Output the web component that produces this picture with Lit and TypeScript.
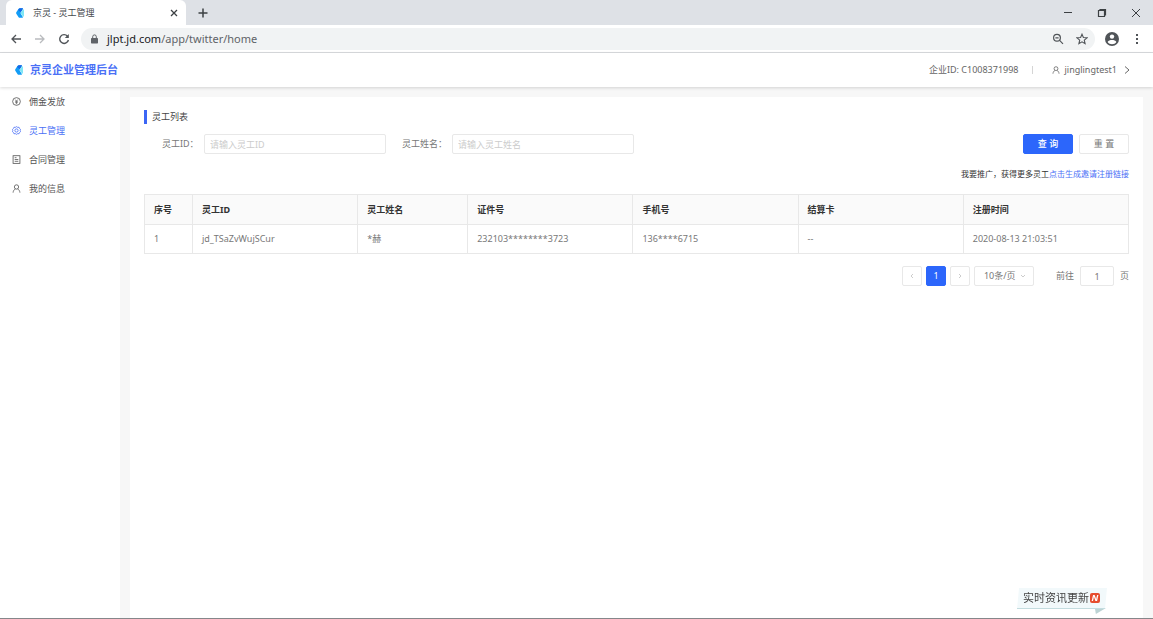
import { LitElement, html, css, svg } from "lit";
import { customElement, property } from "lit/decorators.js";
import { classMap } from "lit/directives/class-map.js";

const controls = css`
  * { box-sizing: border-box; }
  button, input, select { font: inherit; color: inherit; margin: 0; }
  button { cursor: pointer; }
  svg { display: block; fill: none; stroke: currentColor; flex: none; }
  a { text-decoration: none; }
`;

const brandMark = html`
  <svg width="10" height="10" viewBox="0 0 10 10" aria-hidden="true">
    <path d="M3.600 .8Q4 .3 4.600 .3H7.600L8 .8L5.800 4.200Q5.400 5 5.800 5.800L8 9.200L7.600 9.700H4.600Q4 9.700 3.600 9.200L1.300 5.700Q.9 5 1.300 4.300Z" fill="#129cf6" stroke="none"/>
    <path d="M4.600 .3H7.600L8 .8L5.800 4.200L3 2Z" fill="#1668e6" stroke="none"/>
    <path d="M8 1.200Q9 1.400 9 2.200V7.800Q9 8.600 8 8.800L5.900 5.600Q5.500 5 5.900 4.400Z" fill="#7ee6f5" stroke="none"/>
  </svg>`;

const userIcon = svg`<circle cx="5" cy="3.300" r="2.400"/><path d="M1.200 9.600C1.400 7.600 2.200 6.300 3.700 5.600M8.800 9.600C8.600 7.600 7.800 6.300 6.300 5.600"/>`;

@customElement("browser-bar")
class BrowserBar extends LitElement {
  static styles = [controls, css`
    :host { display: block; color: #5f6368; font-family: "Noto Sans", "Noto Sans CJK SC", sans-serif; }
    .strip { display: flex; align-items: center; height: 25px; padding-left: 6px; background: #dee1e6; }
    .tab { display: flex; align-items: center; gap: 8px; width: 180px; height: 25px; padding: 0 6px 0 9px;
      background: #fff; border-radius: 6px 6px 0 0; font-size: 9px; color: #45494d; }
    .title { flex: 1; white-space: nowrap; }
    button { display: grid; place-items: center; padding: 0; border: 0; background: none; width: 12px; height: 16px; color: #3c4043; }
    .add { margin-left: 11px; }
    .window { display: flex; gap: 22px; margin-left: auto; padding-right: 11px; }
    .tools { display: flex; align-items: center; gap: 12px; height: 28px; padding: 0 10px 0 10px;
      background: #fff; border-bottom: 1px solid #d9dbde; }
    .tools button { color: #505458; }
    .tools .off { color: #b9bbbe; }
    .address { flex: 1; display: flex; align-items: center; gap: 8px; height: 22px; padding: 0 7px 0 9px;
      margin: 0 -2px 0 -1px; border-radius: 11px; background: #f1f3f4; }
    .url { flex: 1; min-width: 0; font: 11px "Noto Sans", sans-serif; }
    .url span { color: #202124; }
    .mini { display: flex; gap: 12px; }
  `];
  render() {
    return html`
      <div class="strip">
        <div class="tab">${brandMark}<span class="title">京灵 - 灵工管理</span>
          <button aria-label="关闭标签页"><svg width="8" height="8" viewBox="0 0 8 8" stroke-width="1.300"><path d="M1 1L7 7M7 1L1 7"/></svg></button>
        </div>
        <button class="add" aria-label="新标签页"><svg width="10" height="10" viewBox="0 0 10 10" stroke-width="1.500"><path d="M5 .5V9.500M.5 5H9.500"/></svg></button>
        <div class="window">
          <button aria-label="最小化"><svg width="10" height="10" viewBox="0 0 10 10"><path d="M1 4.500H9"/></svg></button>
          <button aria-label="还原"><svg width="10" height="10" viewBox="0 0 10 10"><path d="M1.500 2.500H7.500V8.500H1.500ZM3 2.500V1.500H8.500V7H7.500" stroke-width="1.200"/></svg></button>
          <button aria-label="关闭"><svg width="10" height="10" viewBox="0 0 10 10"><path d="M1 1L9 9M9 1L1 9"/></svg></button>
        </div>
      </div>
      <div class="tools">
        <button aria-label="后退"><svg width="12" height="12" viewBox="0 0 12 12" stroke-width="1.300"><path d="M11 6H2M6 2L2 6L6 10"/></svg></button>
        <button class="off" aria-label="前进"><svg width="12" height="12" viewBox="0 0 12 12" stroke-width="1.300"><path d="M1 6H10M6 2L10 6L6 10"/></svg></button>
        <button aria-label="刷新"><svg width="12" height="12" viewBox="0 0 12 12" stroke-width="1.400"><path d="M9.500 3.200A4.400 4.400 0 1 0 10.400 7"/><path d="M10.800 1V5H6.800Z" fill="currentColor" stroke="none"/></svg></button>
        <div class="address">
          <svg width="9" height="10" viewBox="0 0 9 10"><rect x="1" y="4" width="7" height="5.500" rx=".7" fill="currentColor" stroke="none"/><path d="M2.700 4V2.700A1.800 1.800 0 0 1 6.300 2.700V4"/></svg>
          <div class="url"><span>jlpt.jd.com</span>/app/twitter/home</div>
          <div class="mini">
            <button aria-label="缩放"><svg width="12" height="12" viewBox="0 0 12 12" stroke-width="1.200"><circle cx="5" cy="4.800" r="3.400"/><path d="M7.600 7.400L11 10.800M3.400 4.800H6.600"/></svg></button>
            <button aria-label="收藏"><svg width="12" height="12" viewBox="0 0 12 12" stroke-width="1.100"><path d="M6 1.200L7.400 4.500L11 4.800L8.300 7.200L9.100 10.700L6 8.800L2.900 10.700L3.700 7.200L1 4.800L4.600 4.500Z"/></svg></button>
          </div>
        </div>
        <svg width="14" height="14" viewBox="0 0 14 14" stroke="none"><circle cx="7" cy="7" r="7" fill="#505458" stroke="none"/><circle cx="7" cy="4.600" r="2.200" fill="#fff" stroke="none"/><path d="M2.600 10C3.500 8.400 5 7.900 7 7.900S10.500 8.400 11.400 10C10.400 11.500 8.800 12.200 7 12.200S3.600 11.500 2.600 10Z" fill="#fff" stroke="none"/></svg>
        <button aria-label="菜单"><svg width="4" height="12" viewBox="0 0 4 12"><path d="M2 1V3M2 5V7M2 9V11" stroke-width="2"/></svg></button>
      </div>`;
  }
}

@customElement("site-header")
class SiteHeader extends LitElement {
  static styles = [controls, css`
    :host { display: flex; align-items: center; height: 34px; padding: 0 22px 0 14px; background: #fff;
      box-shadow: 0 1px 3px #00000026; font-size: 9px; color: #666; position: relative; }
    .brand { display: flex; align-items: center; gap: 6px; margin-right: auto; font-size: 11px; font-weight: 700; color: #4a70f6; }
    .divider { width: 1px; height: 8px; margin: 0 19px 0 14px; background: #d5d5d5; }
    .account { display: flex; align-items: center; gap: 4px; padding: 0; border: 0; background: none; }
    .arrow { margin-left: 2px; }
  `];
  render() {
    return html`
      <a class="brand" href="#home">${brandMark}京灵企业管理后台</a>
      <span>企业ID: C1008371998</span>
      <span class="divider"></span>
      <button class="account">
        <svg width="8" height="8" viewBox="0 0 10 10">${userIcon}</svg>
        jinglingtest1
        <svg class="arrow" width="8" height="8" viewBox="0 0 8 8"><path d="M2 .5L6 4L2 7.500"/></svg>
      </button>`;
  }
}

@customElement("side-menu")
class SideMenu extends LitElement {
  static styles = [controls, css`
    :host { display: block; background: #fff; }
    nav { display: flex; flex-direction: column; }
    a { display: flex; align-items: center; gap: 8px; height: 29px; padding-left: 12px; font-size: 9px; color: #555; }
    .active { color: #4a70f6; }
  `];
  items = [
    { name: "佣金发放", icon: svg`<circle cx="5" cy="5" r="4.300"/><path d="M3.500 2.800L5 4.500L6.500 2.800M3.400 4.800H6.600M3.400 6.300H6.600M5 4.500V8" stroke-width=".7"/>` },
    { name: "灵工管理", active: true, icon: svg`<path d="M5 .7L6.300 1.500L7.800 1.400L8.400 2.800L9.500 3.800L9.100 5L9.500 6.300L8.400 7.200L7.800 8.600L6.300 8.500L5 9.300L3.700 8.500L2.200 8.600L1.600 7.200L.5 6.300L.9 5L.5 3.800L1.600 2.800L2.200 1.400L3.700 1.500Z"/><circle cx="5" cy="5" r="1.800"/>` },
    { name: "合同管理", icon: svg`<rect x="1.200" y=".8" width="7.600" height="8.500"/><path d="M3 3H5M3 5H7M3 7H7"/>` },
    { name: "我的信息", icon: userIcon },
  ];
  render() {
    return html`<nav>${this.items.map((i) => html`
      <a href="#menu" class=${classMap({ active: !!i.active })}>
        <svg width="9" height="9" viewBox="0 0 10 10" stroke-width=".9" aria-hidden="true">${i.icon}</svg>${i.name}
      </a>`)}</nav>`;
  }
}

@customElement("worker-table")
class WorkerTable extends LitElement {
  static styles = [controls, css`
    :host { display: block; }
    table { width: 100%; table-layout: fixed; border-collapse: collapse; color: #777; }
    th, td { height: 29px; padding: 0 9px; border: 1px solid #e8e8e8; text-align: left; font-weight: 400; white-space: nowrap; }
    th { height: 30px; background: #fafafa; color: #333; font-weight: 700; }
    .index { width: 48px; }
    .name { width: 110px; }
  `];
  @property({ attribute: false }) rows: string[][] = [];
  render() {
    return html`<table>
      <thead><tr>
        <th class="index">序号</th><th>灵工ID</th><th class="name">灵工姓名</th><th>证件号</th><th>手机号</th><th>结算卡</th><th>注册时间</th>
      </tr></thead>
      <tbody>${this.rows.map((r) => html`<tr>${r.map((c) => html`<td>${c}</td>`)}</tr>`)}</tbody>
    </table>`;
  }
}

@customElement("page-nav")
class PageNav extends LitElement {
  static styles = [controls, css`
    :host { display: flex; justify-content: flex-end; align-items: center; gap: 4px; color: #777; }
    button, input, .size { height: 20px; border: 1px solid #e8e8e8; border-radius: 2px; background: #fff; }
    button { display: grid; place-items: center; width: 20px; padding: 0; color: #ccc; }
    .current { border-color: #2c66fb; background: #2c66fb; color: #fff; }
    .size { display: grid; grid-template-columns: 1fr 20px; align-items: center; width: 60px; color: #ccc; }
    select { grid-area: 1 / 1 / 2 / 3; width: 100%; height: 18px; padding: 0 0 0 9px; border: 0; appearance: none; background: none; color: #777; }
    .size svg { grid-area: 1 / 2; justify-self: center; pointer-events: none; }
    .jump { display: flex; align-items: center; gap: 6px; margin-left: 18px; }
    input { width: 34px; padding: 0; text-align: center; }
  `];
  render() {
    return html`
      <button aria-label="上一页" disabled><svg width="6" height="6" viewBox="0 0 6 6"><path d="M4 1L2 3L4 5"/></svg></button>
      <button class="current">1</button>
      <button aria-label="下一页" disabled><svg width="6" height="6" viewBox="0 0 6 6"><path d="M2 1L4 3L2 5"/></svg></button>
      <div class="size">
        <select aria-label="每页条数"><option>10条/页</option></select>
        <svg width="6" height="6" viewBox="0 0 6 6"><path d="M1 2L3 4L5 2"/></svg>
      </div>
      <label class="jump">前往 <input value="1"> 页</label>`;
  }
}

@customElement("app-root")
class AppRoot extends LitElement {
  static styles = [controls, css`
    :host { display: flex; flex-direction: column; min-height: 100vh; box-sizing: border-box; background: #f7f7f7;
      border-bottom: 1px solid #85878a; font: 9px/14px "Noto Sans", "Noto Sans CJK SC", sans-serif; color: #444; }
    .body { flex: 1; display: grid; grid-template-columns: 120px 1fr; gap: 10px; padding-right: 10px; }
    .panel { margin-top: 10px; padding: 13px 14px; background: #fff; }
    h1 { display: flex; align-items: center; gap: 5px; height: 14px; margin: 0; font-size: 9px; font-weight: 400; }
    h1::before { content: ""; width: 3px; height: 14px; background: #3c66f5; }
    form { display: flex; align-items: center; margin-top: 10px; padding-left: 18px; color: #777; }
    .label { width: 42px; }
    .wide { width: 50px; margin-left: 16px; }
    input { width: 182px; height: 20px; padding: 0 5px; border: 1px solid #e8e8e8; border-radius: 2px; background: #fff; }
    input::placeholder { color: #ccc; }
    .actions { display: flex; gap: 6px; margin-left: auto; }
    .actions button { width: 50px; height: 20px; padding: 0; border: 1px solid #e8e8e8; border-radius: 2px; background: #fff; }
    .actions .primary { border-color: #2c66fb; background: #2c66fb; color: #fff; font-weight: 500; }
    .promo { margin: 13px 0; text-align: right; font-size: 8px; color: #333; }
    .promo a { color: #4a70f6; }
    page-nav { margin-top: 12px; }
    .news { position: fixed; right: 46px; bottom: 4px; display: flex; align-items: center; gap: 1px; height: 28px;
      padding: 0 7px 6px; border: 0; background: none; font-size: 11px; color: #444; white-space: nowrap; }
    .news svg { position: absolute; inset: 0; width: 100%; height: 100%; z-index: -1; }
    .news { isolation: isolate; }
    .badge { width: 10px; height: 10px; border-radius: 2px; background: #e64d2e; color: #fff; font: italic 700 9px/10px "Noto Sans", sans-serif; text-align: center; }
  `];
  rows = [["1", "jd_TSaZvWujSCur", "*赫", "232103********3723", "136****6715", "--", "2020-08-13 21:03:51"]];
  render() {
    return html`
      <browser-bar></browser-bar>
      <site-header></site-header>
      <div class="body">
        <side-menu></side-menu>
        <main class="panel">
          <h1>灵工列表</h1>
          <form @submit=${(e: Event) => e.preventDefault()}>
            <label class="label" for="worker-id">灵工ID：</label>
            <input id="worker-id" placeholder="请输入灵工ID">
            <label class="label wide" for="worker-name">灵工姓名：</label>
            <input id="worker-name" placeholder="请输入灵工姓名">
            <div class="actions"><button class="primary">查 询</button><button type="reset">重 置</button></div>
          </form>
          <p class="promo">我要推广，获得更多灵工<a href="#invite">点击生成邀请注册链接</a></p>
          <worker-table .rows=${this.rows}></worker-table>
          <page-nav></page-nav>
        </main>
      </div>
      <button class="news">
        <svg viewBox="0 0 90 28" preserveAspectRatio="none" aria-hidden="true">
          <path d="M78 21H89L79 27Z" fill="#bcd3d4" stroke="none"/>
          <path d="M3 1H90L88 22H1Z" fill="#f2f9fb" stroke="none"/>
          <path d="M1 21.500H88" stroke="#c3dcdf"/>
        </svg>
        实时资讯更新<span class="badge">N</span>
      </button>`;
  }
}
